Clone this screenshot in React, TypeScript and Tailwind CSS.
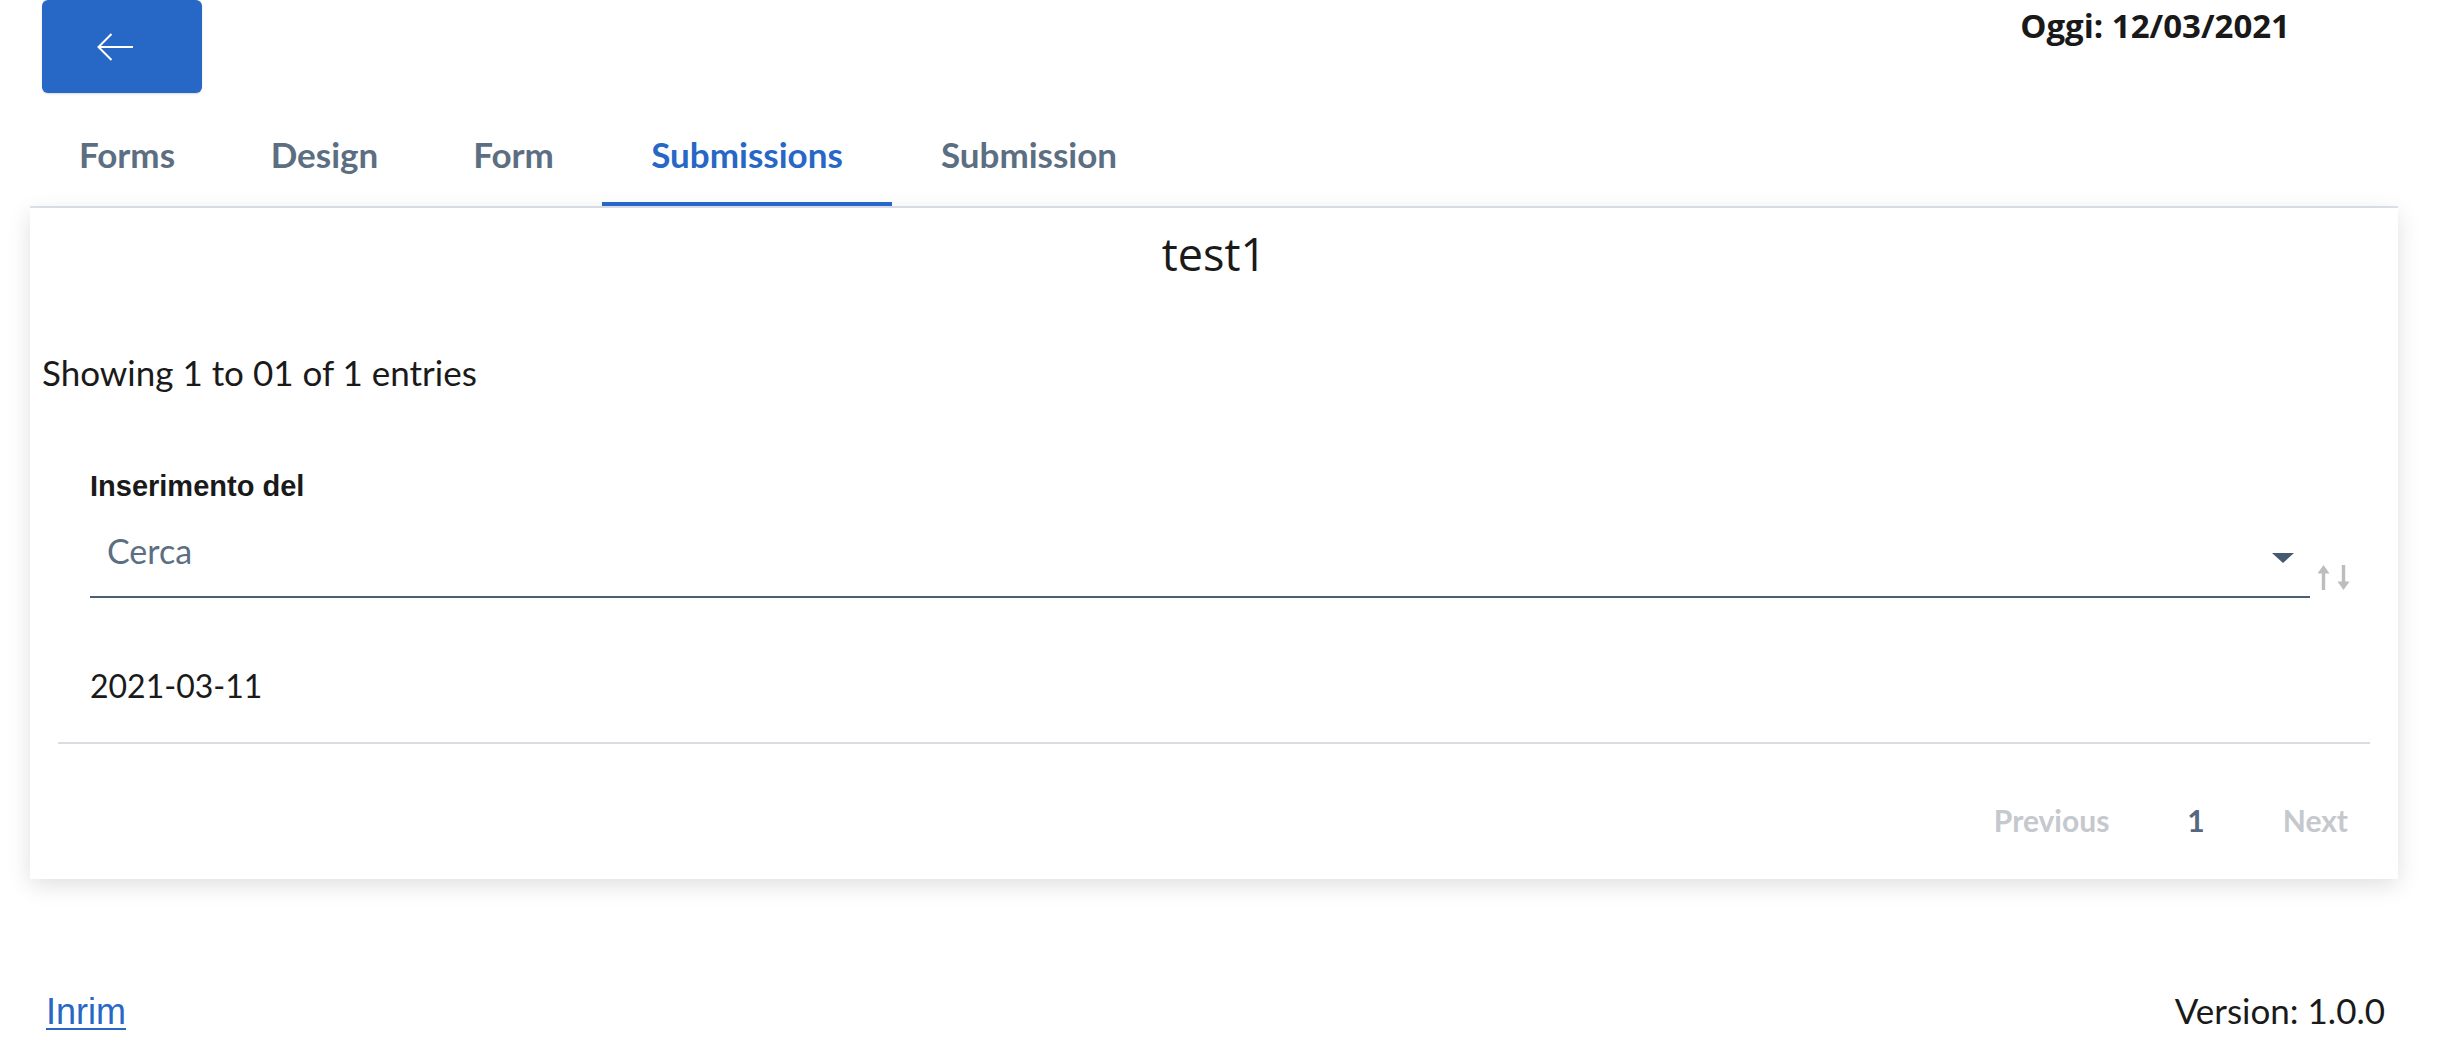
export default function App() {
  const tabs = [
    { label: "Forms", w: "w-[194px]", active: false },
    { label: "Design", w: "w-[201px]", active: false },
    { label: "Form", w: "w-[177px]", active: false },
    { label: "Submissions", w: "w-[290px]", active: true },
    { label: "Submission", w: "w-[274px]", active: false },
  ];
  return (
    <div className="w-[2440px] h-[1052px] bg-white text-[#1a1a1a] overflow-hidden">
      {/* header */}
      <div className="h-[94px] flex justify-between items-start">
        <button className="ml-[42px] w-[160px] h-[93px] rounded-[6px] bg-[#2767c6] flex items-center pl-[55px] shadow-[0_1px_2px_rgba(0,0,0,0.15)]">
          <svg width="36" height="28" viewBox="0 0 36 28">
            <path d="M1.5 14 H36 M14.5 1 L1.5 14 L14.5 27" stroke="white" strokeWidth="2" fill="none" />
          </svg>
        </button>
        <div className="mt-[9px] mr-[150px] font-['Open_Sans',sans-serif] font-bold text-[33px] leading-[33px] text-[#191919]">
          Oggi: 12/03/2021
        </div>
      </div>

      {/* tabs */}
      <div className="ml-[30px] mr-[42px] h-[114px] flex items-end border-b-2 border-[#dfe3f0]">
        {tabs.map((t) => (
          <div
            key={t.label}
            className={
              t.active
                ? `${t.w} text-center pb-[30px] border-b-4 border-[#2767c6] text-[#2767c6] font-['Lato',sans-serif] font-bold text-[35px] leading-[35px]`
                : `${t.w} text-center pb-[30px] border-b-4 border-transparent text-[#5c6f82] font-['Lato',sans-serif] font-bold text-[35px] leading-[35px]`
            }
          >
            {t.label}
          </div>
        ))}
      </div>

      {/* card */}
      <div className="ml-[30px] mr-[42px] h-[671px] bg-white shadow-[0_6px_22px_rgba(0,0,0,0.13)] flex flex-col">
        <div className="pt-[24px] text-center font-['Open_Sans',sans-serif] text-[45px] leading-[44px] text-[#1a1a1a]">
          test1
        </div>
        <div className="mt-[79px] pl-[12px] font-['Lato',sans-serif] text-[35px] leading-[35px] text-[#1a1a1a]">
          Showing 1 to 01 of 1 entries
        </div>

        <div className="mx-[28px]">
          {/* header cell */}
          <div className="pl-[32px] pr-[20px] mt-[82px]">
            <div className="font-['Liberation_Sans',sans-serif] font-bold text-[29px] leading-[29px] text-[#1a1a1a]">
              Inserimento del
            </div>
            <div className="mt-[33px] flex items-end">
              <div className="relative flex-1 border-b-2 border-[#4c5e73] pl-[17px] pb-[28px]">
                <div className="font-['Lato',sans-serif] text-[34px] leading-[34px] text-[#5c6f82]">
                  Cerca
                </div>
                <svg className="absolute right-[16px] top-[19px]" width="22" height="10" viewBox="0 0 22 10">
                  <polygon points="0,0 22,0 11,10" fill="#455a70" />
                </svg>
              </div>
              <svg className="ml-[8px] mb-[7px]" width="32" height="26" viewBox="0 0 32 26">
                <path d="M5.5 0 L11.5 8.5 L7.2 8.5 L7.2 25 L3.8 25 L3.8 8.5 L-0.5 8.5 Z" fill="#bdbdbd" />
                <path d="M23.8 0 L27.2 0 L27.2 16.5 L31.5 16.5 L25.5 25 L19.5 16.5 L23.8 16.5 Z" fill="#bdbdbd" />
              </svg>
            </div>
          </div>

          {/* row */}
          <div className="mt-[72px] pl-[32px] pb-[40px] border-b-2 border-[#d9dde2]">
            <div className="font-['Lato',sans-serif] text-[32px] leading-[32px] text-[#1a1a1a]">
              2021-03-11
            </div>
          </div>
        </div>

        {/* pagination */}
        <div className="mt-[61px] mr-[50px] flex justify-end gap-[78px] font-['Lato',sans-serif] font-bold text-[30px] leading-[30px]">
          <span className="text-[#c5c8cd]">Previous</span>
          <span className="text-[#556880]">1</span>
          <span className="text-[#c5c8cd]">Next</span>
        </div>
      </div>

      {/* footer */}
      <div className="mt-[113px] flex justify-between items-start">
        <a
          href="#"
          className="ml-[46px] mt-[2px] font-['Liberation_Sans',sans-serif] text-[36px] leading-[36px] text-[#2767c6] underline decoration-[2px] underline-offset-[4px]"
        >
          Inrim
        </a>
        <div className="mr-[55px] mt-[1px] font-['Lato',sans-serif] text-[35px] leading-[35px] text-[#1a1a1a]">
          Version: 1.0.0
        </div>
      </div>
    </div>
  );
}
